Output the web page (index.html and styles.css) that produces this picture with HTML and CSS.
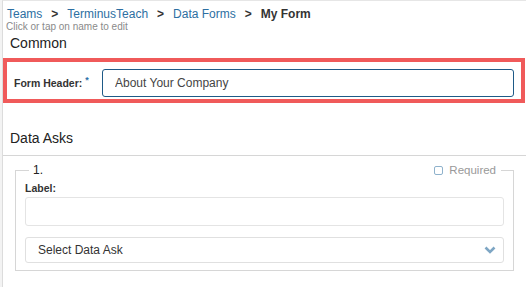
FILE: index.html
```html
<!DOCTYPE html>
<html lang="en">
<head>
  <meta charset="UTF-8" />
  <meta name="viewport" content="width=device-width, initial-scale=1.0"/>
  <title>My Form</title>
  <link rel="stylesheet" href="styles.css">
</head>
<body>
  <div class="panel">
    <nav class="crumbs">
      <a href="#">Teams</a><span class="sep">&gt;</span><a href="#">TerminusTeach</a><span class="sep">&gt;</span><a href="#">Data Forms</a><span class="sep">&gt;</span><span class="current">My Form</span>
    </nav>
    <div class="hint">Click or tap on name to edit</div>

    <h2 class="section-title">Common</h2>
    <div class="highlight">
      <label class="field-label" for="formHeader">Form Header:<sup>*</sup></label>
      <input class="text-input focused" id="formHeader" type="text" value="About Your Company" />
    </div>

    <h2 class="section-title divided">Data Asks</h2>

    <fieldset class="ask">
      <legend>
        <span class="ask-num">1.</span>
        <label class="required"><span class="box"></span>Required</label>
      </legend>
      <label class="field-label block" for="label1">Label:</label>
      <input class="text-input" id="label1" type="text" />
      <div class="select">
        <span>Select Data Ask</span>
        <svg width="12" height="8" viewBox="0 0 12 8"><path d="M1.5 1.5l4.5 4.5 4.5-4.5" fill="none" stroke="#7ea6c4" stroke-width="2.6"/></svg>
      </div>
    </fieldset>
  </div>
</body>
</html>
```

FILE: styles.css
```css
* {
  box-sizing: border-box;
}

body {
  font-family: 'Liberation Sans', Arial, sans-serif;
  background: #f3f3f3;
  margin: 0;
  color: #333;
}

.panel {
  margin-left: 2px;
  min-height: 100vh;
  background: white;
  border-left: 1px solid #dcdcdc;
  border-top: 1px solid #e6e6e6;
}

.crumbs {
  padding: 6px 0 0 4px;
  font-size: 12px;
  line-height: 14px;
}

.crumbs a {
  color: #2d6fa2;
  text-decoration: none;
}

.crumbs .sep {
  margin: 0 9px;
  font-weight: bold;
  color: #333;
}

.crumbs .current {
  font-weight: bold;
  color: #333;
}

.hint {
  padding-left: 3px;
  font-size: 10px;
  line-height: 12px;
  color: #8a8a8a;
}

.section-title {
  margin: 1px 0 0;
  padding-left: 7px;
  font-size: 14px;
  line-height: 18px;
  font-weight: normal;
  color: #222;
}

.section-title.divided {
  margin-top: 26px;
  padding-bottom: 8px;
  border-bottom: 1px solid #d6d6d6;
}

.highlight {
  display: flex;
  align-items: center;
  margin: 6px 1px 0 0;
  padding: 7px 7px 2px 7px;
  border: 4px solid #f05a5a;
}

.field-label {
  flex-shrink: 0;
  width: 88px;
  font-size: 10.5px;
  font-weight: bold;
  color: #333;
}

.field-label sup {
  margin-left: 3px;
  font-size: 9px;
  line-height: 0;
  color: #2e74aa;
}

.field-label.block {
  display: block;
  width: auto;
  margin-top: 4px;
  line-height: 14px;
}

.text-input {
  display: block;
  width: 100%;
  height: 29px;
  margin: 2px 0 0;
  padding: 0 12px;
  font-family: inherit;
  font-size: 12px;
  color: #444;
  border: 1px solid #e4e4e4;
  border-radius: 3px;
  outline: none;
}

.text-input.focused {
  flex: 1;
  height: 28px;
  margin: 0;
  border-color: #1e5a87;
}

.ask {
  margin: 7px 12px 0 12px;
  padding: 0 9px 7px 9px;
  border: 1px solid #d6d6d6;
}

.ask legend {
  display: flex;
  justify-content: space-between;
  align-items: center;
  width: calc(100% - 7px);
  margin-left: 4px;
  padding: 0 5px 0 4px;
  font-size: 12px;
  line-height: 14px;
}

.ask-num {
  color: #222;
}

.required {
  display: flex;
  align-items: center;
  font-size: 11.5px;
  color: #999;
}

.required .box {
  width: 9px;
  height: 9px;
  margin-right: 6px;
  border: 1px solid #8fb2cc;
  border-radius: 2px;
}

.select {
  display: flex;
  justify-content: space-between;
  align-items: center;
  height: 26px;
  margin-top: 11px;
  padding: 0 7px 0 12px;
  font-size: 12px;
  color: #333;
  border: 1px solid #e0e0e0;
  border-radius: 3px;
}
```
